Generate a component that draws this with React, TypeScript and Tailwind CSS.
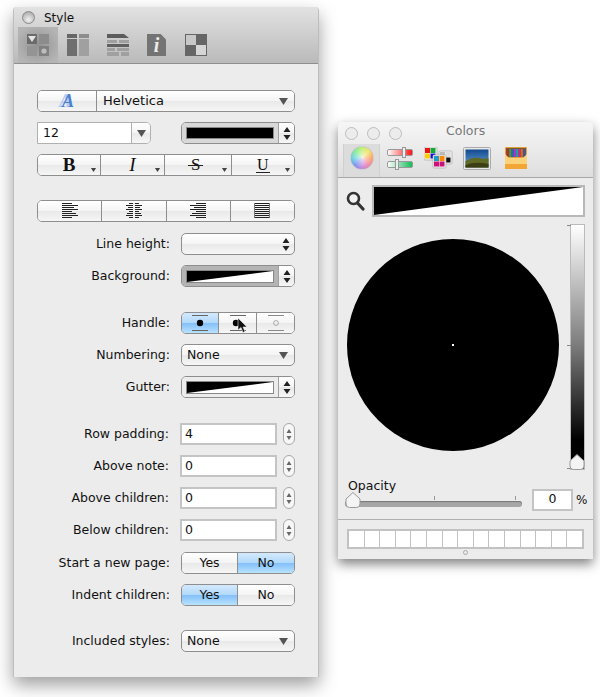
import type { ReactNode } from "react";

const btn = "bg-[linear-gradient(#ffffff,#f4f4f4_50%,#e9e9e9_52%,#f6f6f6)]";
const blue = "bg-[linear-gradient(#d3e9fc,#b2d9fb_48%,#84c0f9_52%,#b8e2ff)]";

function UpDown({ small = false }: { small?: boolean }) {
  return (
    <svg width="8" height={small ? 14 : 15} viewBox="0 0 8 15" className="block">
      <path d="M4 1 L7.5 6 H0.5 Z M4 14 L0.5 9 H7.5 Z" fill={small ? "#555" : "#222"} />
    </svg>
  );
}

function DownTri({ w = 9, h = 7, color = "#555" }: { w?: number; h?: number; color?: string }) {
  return (
    <svg width={w} height={h} viewBox="0 0 9 7" className="block">
      <path d="M0 0 H9 L4.5 7 Z" fill={color} />
    </svg>
  );
}

function Slant({ className }: { className: string }) {
  return (
    <svg viewBox="0 0 100 100" preserveAspectRatio="none" className={className}>
      <rect width="100" height="100" fill="#fff" />
      <path d="M0 0 H100 L0 100 Z" fill="#000" />
    </svg>
  );
}

function Row({ label, children }: { label: string; children: ReactNode }) {
  return (
    <div className="flex h-[22px] items-center">
      <div className="w-[133px] whitespace-nowrap text-right text-[#111]">{label}</div>
      <div className="ml-[11px] w-[114px]">{children}</div>
    </div>
  );
}

function Well({ gray = false }: { gray?: boolean }) {
  return (
    <div className="flex h-[22px] overflow-hidden rounded-[5px] border border-[#8e8e8e]">
      <div className={`flex flex-1 items-center px-[5px] ${gray ? "bg-[#b4b4b4]" : "bg-[#ececec]"}`}>
        <Slant className="block h-[11px] w-full outline outline-[#888]" />
      </div>
      <div className={`flex w-[16px] items-center justify-center border-l border-[#a0a0a0] ${btn}`}>
        <UpDown />
      </div>
    </div>
  );
}

function Select({ value }: { value: string }) {
  return (
    <div className={`flex h-[22px] items-center justify-between rounded-[5px] border border-[#8e8e8e] pl-[5px] pr-[6px] ${btn}`}>
      <span>{value}</span>
      <DownTri />
    </div>
  );
}

function Updown() {
  return (
    <div className="flex h-[22px] w-[12px] items-center justify-center rounded-full border border-[#a8a8a8] bg-[#f7f7f7]">
      <svg width="6" height="13" viewBox="0 0 6 13" className="block">
        <path d="M3 1 L5.5 5 H0.5 Z M3 12 L0.5 8 H5.5 Z" fill="#666" />
      </svg>
    </div>
  );
}

function NumField({ label, value }: { label: string; value: string }) {
  return (
    <div className="flex h-[22px] items-center">
      <div className="w-[132px] whitespace-nowrap text-right text-[#111]">{label}</div>
      <div className="ml-[11px] flex h-[22px] w-[97px] items-center border-2 border-[#c4c4c4] bg-white pl-[3px]">
        {value}
      </div>
      <div className="ml-[6px]">
        <Updown />
      </div>
    </div>
  );
}

function Toggle({ on }: { on: "Yes" | "No" }) {
  return (
    <div className="flex h-[22px] overflow-hidden rounded-[5px] border border-[#8e8e8e]">
      <div className={`flex w-[56px] items-center justify-center border-r border-[#8e8e8e] ${on === "Yes" ? blue : btn}`}>Yes</div>
      <div className={`flex flex-1 items-center justify-center ${on === "No" ? blue : btn}`}>No</div>
    </div>
  );
}

function Corner() {
  return (
    <span className="absolute bottom-[3px] right-[3px]">
      <DownTri w={7} h={4} color="#444" />
    </span>
  );
}

function AlignIcon({ kind }: { kind: "left" | "center" | "right" | "full" }) {
  const widths = [10, 16, 12, 16, 10, 14, 16, 10];
  return (
    <svg width="16" height="16" viewBox="0 0 16 16" className="block" shapeRendering="crispEdges">
      {widths.map((n, r) => {
        const w = kind === "full" ? 14 : n;
        const x = kind === "left" ? 0 : kind === "full" ? 1 : kind === "right" ? 16 - w : 8 - w / 2;
        return <rect key={r} x={x} y={r * 2} width={w} height="1" fill="#222" />;
      })}
      {kind === "center" && <rect x="7" y="0" width="2" height="16" fill="#f0f0f0" />}
      {kind === "full" && (
        <>
          <rect x="0" y="0" width="1" height="15" fill="#777" />
          <rect x="15" y="0" width="1" height="15" fill="#777" />
        </>
      )}
    </svg>
  );
}

function HandleIcon({ dot = "#000", lines = "#666", r = 3.2, cx = 8, open = false }: { dot?: string; lines?: string; r?: number; cx?: number; open?: boolean }) {
  return (
    <svg width="16" height="16" viewBox="0 0 16 16" className="block">
      <rect x="0" y="0" width="16" height="1" fill={lines} />
      <rect x="0" y="15" width="16" height="1" fill={lines} />
      <circle cx={cx} cy="8" r={r} fill={open ? "none" : dot} stroke={dot} strokeWidth={open ? 1 : 0} />
    </svg>
  );
}

function Tool1() {
  return (
    <svg width="22" height="22" viewBox="0 0 22 22" className="block" shapeRendering="crispEdges">
      <rect x="0" y="0" width="10" height="10" fill="#6a6a6a" />
      <rect x="12" y="0" width="10" height="10" fill="#8c8c8c" />
      <rect x="0" y="12" width="10" height="10" fill="#949494" />
      <rect x="12" y="12" width="10" height="10" fill="#808080" />
      <path d="M1 2 H9 L5 8 Z" fill="#e4e4e4" shapeRendering="auto" />
      <circle cx="17" cy="17" r="2.6" fill="#bdbdbd" shapeRendering="auto" />
    </svg>
  );
}

function Tool2() {
  return (
    <svg width="22" height="22" viewBox="0 0 22 22" className="block" shapeRendering="crispEdges">
      <rect width="10" height="4" fill="#666" />
      <rect x="12" width="10" height="4" fill="#8c8c8c" />
      <rect y="5" width="10" height="17" fill="#6e6e6e" />
      <rect x="12" y="5" width="10" height="17" fill="#a0a0a0" />
    </svg>
  );
}

function Tool3() {
  return (
    <svg width="22" height="22" viewBox="0 0 22 22" className="block">
      <path d="M0 0 H17 L22 4 H0 Z" fill="#5c5c5c" />
      <g shapeRendering="crispEdges">
        <rect y="6" width="10" height="3" fill="#a0a0a0" />
        <rect x="12" y="6" width="10" height="3" fill="#a0a0a0" />
        <rect y="10" width="22" height="3" fill="#606060" />
        <rect y="14" width="8" height="3" fill="#a0a0a0" />
        <rect x="10" y="14" width="12" height="3" fill="#a0a0a0" />
        <rect y="18" width="12" height="4" fill="#a0a0a0" />
        <rect x="14" y="18" width="8" height="4" fill="#a0a0a0" />
      </g>
    </svg>
  );
}

function Tool4() {
  return (
    <div className="relative h-[22px] w-[19px] bg-[#747474] [clip-path:polygon(0_0,72%_0,100%_25%,100%_100%,0_100%)]">
      <span className="absolute inset-0 flex items-center justify-center font-['Liberation_Serif',serif] text-[20px] font-bold italic leading-none text-[#ececec]">
        i
      </span>
    </div>
  );
}

function Tool5() {
  return (
    <svg width="22" height="22" viewBox="0 0 22 22" className="block" shapeRendering="crispEdges">
      <rect width="22" height="22" fill="#666" />
      <rect x="1" y="1" width="10" height="10" fill="#c8c8c8" />
      <rect x="11" y="11" width="10" height="10" fill="#d6d6d6" />
    </svg>
  );
}

function SliderIcon() {
  return (
    <svg width="26" height="23" viewBox="0 0 26 23" className="block">
      <defs>
        <linearGradient id="r" x1="0" x2="1">
          <stop offset="0" stopColor="#fff" />
          <stop offset="1" stopColor="#f11" />
        </linearGradient>
        <linearGradient id="g" x1="0" x2="1">
          <stop offset="0" stopColor="#fff" />
          <stop offset="1" stopColor="#1b5" />
        </linearGradient>
      </defs>
      <rect x="0.5" y="2.5" width="25" height="6" rx="1.5" fill="url(#r)" stroke="#999" />
      <rect x="0.5" y="14.5" width="25" height="6" rx="1.5" fill="url(#g)" stroke="#999" />
      <rect x="15.5" y="0.5" width="3" height="10" fill="#eee" stroke="#999" />
      <rect x="8.5" y="12.5" width="3" height="10" fill="#eee" stroke="#999" />
    </svg>
  );
}

function PaletteIcon() {
  const a = ["#e11", "#1a3", "#fc0", "#11d"];
  const b = ["#bbb", "#ddd", "#333", "#111"];
  const c = ["#29c", "#f80", "#c17", "#c17"];
  const grid = (x: number, y: number, cols: string[]) => (
    <g>
      <rect x={x - 1} y={y - 1} width="13" height="13" rx="1" fill="#f4f4f4" stroke="#aaa" strokeWidth="0.7" />
      {cols.map((col, i) => (
        <rect key={i} x={x + (i % 2) * 5.5} y={y + Math.floor(i / 2) * 5.5} width="5" height="5" fill={col} />
      ))}
    </g>
  );
  return (
    <svg width="29" height="22" viewBox="0 0 29 22" className="block">
      {grid(1, 1, a)}
      {grid(16, 5, b)}
      {grid(10, 9, c)}
    </svg>
  );
}

function PhotoIcon() {
  return (
    <svg width="28" height="23" viewBox="0 0 28 23" className="block">
      <defs>
        <linearGradient id="sky" x1="0" x2="0" y1="0" y2="1">
          <stop offset="0" stopColor="#12498f" />
          <stop offset="1" stopColor="#6aa6d8" />
        </linearGradient>
      </defs>
      <rect x="0.5" y="0.5" width="27" height="22" rx="1" fill="#e8e8e8" stroke="#aaa" />
      <rect x="2.5" y="2.5" width="23" height="18" fill="url(#sky)" />
      <path d="M2.5 14 Q10 9.5 16 11 T25.5 11 V20.5 H2.5 Z" fill="#5f6b24" />
      <path d="M2.5 18 Q12 14 25.5 17 V20.5 H2.5 Z" fill="#3c3f14" />
    </svg>
  );
}

function CrayonIcon() {
  const cols = ["#c22", "#2a5", "#26c", "#a3c", "#1aa", "#c2a", "#e60", "#35c"];
  return (
    <svg width="22" height="22" viewBox="0 0 22 22" className="block">
      <rect x="0" y="0" width="22" height="22" rx="1" fill="#e0a040" />
      <rect x="1" y="1" width="20" height="9" fill="#7a5a28" />
      {cols.map((c, i) => (
        <rect key={i} x={2 + i * 2.3} y="2" width="2" height="8" fill={c} />
      ))}
      <path d="M0 7 L4 11 H18 L22 7 V17 H0 Z" fill="#fad27a" />
      <rect y="17" width="22" height="5" fill="#f2a636" />
    </svg>
  );
}

function Knob({ className }: { className: string }) {
  return (
    <svg width="16" height="16" viewBox="0 0 16 16" className={className}>
      <path d="M8 0.5 L15 7 V12 Q15 15.5 11.5 15.5 H4.5 Q1 15.5 1 12 V7 Z" fill="#f4f4f4" stroke="#999" />
    </svg>
  );
}

function StyleWindow() {
  return (
    <div className="absolute left-[13px] top-[7px] flex h-[670px] w-[306px] flex-col rounded-t-[4px] border-x border-[#bdbdbd] bg-[#ececec] shadow-[0_8px_18px_rgba(0,0,0,0.38)]">
      <div className="h-[57px] shrink-0 rounded-t-[4px] border-b border-[#8f8f8f] bg-[linear-gradient(#e2e2e2,#bababa)]">
        <div className="flex h-[19px] items-center pl-[8px] pt-[2px]">
          <div className="h-[13px] w-[13px] rounded-full border border-[#8a8a8a] bg-[radial-gradient(circle_at_50%_70%,#f2f2f2,#9d9d9d)]" />
          <span className="ml-[9px] text-[12px] text-[#111]">Style</span>
        </div>
        <div className="flex h-[37px] items-start pl-[4px] pt-[1px]">
          <div className="flex h-[36px] w-[40px] items-center justify-center bg-[radial-gradient(ellipse_at_center,#929292,#b4b4b4_80%)]">
            <Tool1 />
          </div>
          <div className="flex h-[36px] w-[40px] items-center justify-center"><Tool2 /></div>
          <div className="flex h-[36px] w-[39px] items-center justify-center"><Tool3 /></div>
          <div className="flex h-[36px] w-[39px] items-center justify-center"><Tool4 /></div>
          <div className="flex h-[36px] w-[40px] items-center justify-center"><Tool5 /></div>
        </div>
      </div>

      <div className="flex flex-col gap-[10px] pl-[23px] pt-[26px]">
        <div className="flex h-[22px] w-[258px] overflow-hidden rounded-[5px] border border-[#8e8e8e]">
          <div className={`flex w-[59px] items-center justify-center border-r border-[#8e8e8e] pl-[2px] ${btn}`}>
            <span className="font-['Liberation_Serif',serif] text-[18px] font-bold italic leading-[20px] text-[#4c7fd0] [text-shadow:-3px_0_0_#b4cdf0]">A</span>
          </div>
          <div className={`flex flex-1 items-center justify-between pl-[6px] pr-[6px] text-[13px] ${btn}`}>
            <span>Helvetica</span>
            <DownTri />
          </div>
        </div>

        <div className="flex h-[22px] w-[258px] items-center justify-between">
          <div className="flex h-[22px] w-[114px] overflow-hidden rounded-r-[5px] border border-[#b0b0b0]">
            <div className="flex flex-1 items-center bg-white pl-[5px]">12</div>
            <div className={`flex w-[19px] items-center justify-center border-l border-[#b0b0b0] ${btn}`}>
              <DownTri />
            </div>
          </div>
          <div className="flex h-[22px] w-[114px] overflow-hidden rounded-[5px] border border-[#8e8e8e]">
            <div className="flex flex-1 items-center bg-[#d8d8d8] px-[5px]">
              <div className="h-[10px] w-full bg-black outline outline-[#888]" />
            </div>
            <div className={`flex w-[16px] items-center justify-center border-l border-[#a0a0a0] ${btn}`}>
              <UpDown />
            </div>
          </div>
        </div>

        <div className="flex h-[22px] w-[258px] overflow-hidden rounded-[5px] border border-[#8e8e8e] font-['Liberation_Serif',serif] text-[#111]">
          <div className={`relative flex flex-1 items-center justify-center border-r border-[#8e8e8e] text-[19px] font-bold ${btn}`}>B<Corner /></div>
          <div className={`relative flex flex-1 items-center justify-center border-r border-[#8e8e8e] text-[19px] italic ${btn}`}>I<Corner /></div>
          <div className={`relative flex flex-1 items-center justify-center border-r border-[#8e8e8e] pr-[4px] text-[17px] ${btn}`}>
            <span className="relative inline-block px-[2px] leading-[18px]">
              S
              <span className="absolute left-[-1px] right-[-1px] top-[9px] h-px bg-[#222]" />
            </span>
            <Corner />
          </div>
          <div className={`relative flex flex-1 items-center justify-center text-[16px] ${btn}`}>
            <span className="inline-block border-b border-[#222] px-[1px] leading-[15px]">U</span>
            <Corner />
          </div>
        </div>

        <div className="mt-[14px] flex h-[22px] w-[258px] overflow-hidden rounded-[5px] border border-[#8e8e8e]">
          <div className={`flex flex-1 items-center justify-center border-r border-[#8e8e8e] ${btn}`}><AlignIcon kind="left" /></div>
          <div className={`flex flex-1 items-center justify-center border-r border-[#8e8e8e] ${btn}`}><AlignIcon kind="center" /></div>
          <div className={`flex flex-1 items-center justify-center border-r border-[#8e8e8e] ${btn}`}><AlignIcon kind="right" /></div>
          <div className={`flex flex-1 items-center justify-center ${btn}`}><AlignIcon kind="full" /></div>
        </div>

        <div className="mt-[1px]">
          <Row label="Line height:">
            <div className={`flex h-[22px] items-center justify-end rounded-[5px] border border-[#8e8e8e] pr-[4px] ${btn}`}>
              <UpDown />
            </div>
          </Row>
        </div>
        <Row label="Background:"><Well gray /></Row>

        <div className="mt-[15px]">
          <Row label="Handle:">
            <div className="flex h-[22px] overflow-hidden rounded-[5px] border border-[#8e8e8e]">
              <div className={`flex w-[37px] items-center justify-center border-r border-[#8e8e8e] ${blue}`}><HandleIcon /></div>
              <div className={`relative flex w-[38px] items-center justify-center border-r border-[#8e8e8e] ${btn}`}>
                <HandleIcon cx={6} />
                <svg width="11" height="16" viewBox="0 0 11 16" className="absolute left-[18px] top-[5px]">
                  <path d="M1 0 V12 L4 9.5 L6 14.5 L8 13.5 L6 9 H10 Z" fill="#111" stroke="#eee" strokeWidth="0.6" />
                </svg>
              </div>
              <div className={`flex flex-1 items-center justify-center ${btn}`}><HandleIcon dot="#aaa" lines="#888" r={2.4} open /></div>
            </div>
          </Row>
        </div>
        <Row label="Numbering:"><Select value="None" /></Row>
        <Row label="Gutter:"><Well /></Row>

        <div className="mt-[15px]">
          <NumField label="Row padding:" value="4" />
        </div>
        <NumField label="Above note:" value="0" />
        <NumField label="Above children:" value="0" />
        <NumField label="Below children:" value="0" />
        <div className="mt-[1px]">
          <Row label="Start a new page:"><Toggle on="No" /></Row>
        </div>
        <Row label="Indent children:"><Toggle on="Yes" /></Row>

        <div className="mt-[14px]">
          <Row label="Included styles:"><Select value="None" /></Row>
        </div>
      </div>
    </div>
  );
}

function ColorsWindow() {
  const wells = Array.from({ length: 15 });
  return (
    <div className="absolute left-[338px] top-[122px] flex h-[437px] w-[255px] flex-col rounded-t-[4px] bg-[#ececec] shadow-[0_5px_12px_rgba(0,0,0,0.5)]">
      <div className="h-[56px] shrink-0 rounded-t-[4px] border-b border-[#a8a8a8] bg-[linear-gradient(#f6f6f6,#dedede)]">
        <div className="relative flex h-[22px] items-center gap-[9px] pl-[7px]">
          <div className="h-[13px] w-[13px] rounded-full border border-[#bdbdbd] bg-[#ececec]" />
          <div className="h-[13px] w-[13px] rounded-full border border-[#bdbdbd] bg-[#ececec]" />
          <div className="h-[13px] w-[13px] rounded-full border border-[#bdbdbd] bg-[#ececec]" />
          <span className="absolute left-[108px] top-0 text-[12.5px] leading-[18px] text-[#777]">Colors</span>
        </div>
        <div className="flex h-[33px] items-start pl-[5px]">
          <div className="flex h-[33px] w-[37px] items-start justify-center border-x border-[#d0d0d0] bg-[#dcdcdc] pt-[3px]">
            <div className="h-[22px] w-[22px] rounded-full bg-[radial-gradient(circle,rgba(255,255,255,0.75),rgba(255,255,255,0)_70%),conic-gradient(#b8f070,#f8e060,#f8a060,#f080a0,#c080e0,#7090f0,#60d0e0,#80e890,#b8f070)] shadow-[0_0_1px_#666]" />
          </div>
          <div className="ml-[7px] mt-[3px]"><SliderIcon /></div>
          <div className="ml-[11px] mt-[3px]"><PaletteIcon /></div>
          <div className="ml-[10px] mt-[3px]"><PhotoIcon /></div>
          <div className="ml-[14px] mt-[3px]"><CrayonIcon /></div>
        </div>
      </div>

      <div className="flex items-center pl-[8px] pt-[7px]">
        <svg width="19" height="20" viewBox="0 0 19 20" className="block">
          <circle cx="7.5" cy="7.5" r="5.5" fill="#f2f2f2" stroke="#333" strokeWidth="2.6" />
          <path d="M11.5 12 L17 18" stroke="#333" strokeWidth="3.2" strokeLinecap="round" />
        </svg>
        <div className="ml-[7px] h-[32px] w-[213px] border-2 border-[#b8b8b8]">
          <Slant className="block h-full w-full" />
        </div>
      </div>

      <div className="flex items-start pl-[9px] pt-[7px]">
        <div className="relative mt-[15px] h-[212px] w-[212px] rounded-full bg-black">
          <div className="absolute left-[105px] top-[105px] h-[2px] w-[2px] bg-white" />
        </div>
        <div className="relative ml-[11px] h-[246px] w-[15px] border border-[#bbb] bg-[linear-gradient(#ffffff,#7a7a7a_50%,#000000_88%)]">
          <div className="absolute -left-[4px] top-0 h-px w-[4px] bg-[#888]" />
          <div className="absolute -left-[4px] top-[120px] h-px w-[4px] bg-[#888]" />
          <div className="absolute -left-[4px] bottom-0 h-px w-[4px] bg-[#888]" />
          <Knob className="absolute -left-[2px] bottom-[-1px] block" />
        </div>
      </div>

      <div className="flex items-end pl-[7px] pt-[7px]">
        <div className="w-[177px]">
          <div className="pl-[3px] text-[#111]">Opacity</div>
          <div className="flex justify-end gap-[80px] pr-[6px]">
            <div className="h-[4px] w-px bg-[#999]" />
            <div className="h-[4px] w-px bg-[#999]" />
          </div>
          <div className="relative mt-[1px] h-[6px] rounded-full bg-[#a6a6a6] shadow-[inset_0_1px_1px_#777]">
            <Knob className="absolute -top-[9px] left-0 block" />
          </div>
        </div>
        <div className="mb-[-4px] ml-[10px] flex h-[22px] w-[41px] items-center justify-center border-2 border-[#c4c4c4] bg-white">0</div>
        <span className="mb-[-2px] ml-[3px] text-[12px]">%</span>
      </div>

      <div className="mt-[12px] border-t border-[#b0b0b0] pl-[9px] pr-[9px] pt-[9px]">
        <div className="flex h-[20px] gap-px bg-[#c2c2c2] p-[2px]">
          {wells.map((_, i) => (
            <div key={i} className="flex-1 bg-white" />
          ))}
        </div>
        <div className="mx-auto mt-[1px] h-[5px] w-[5px] rounded-full border border-[#aaa]" />
      </div>
    </div>
  );
}

export default function App() {
  return (
    <div className="relative h-[697px] w-[600px] overflow-hidden bg-white font-['DejaVu_Sans',sans-serif] text-[12.5px] text-[#111]">
      <StyleWindow />
      <ColorsWindow />
    </div>
  );
}
